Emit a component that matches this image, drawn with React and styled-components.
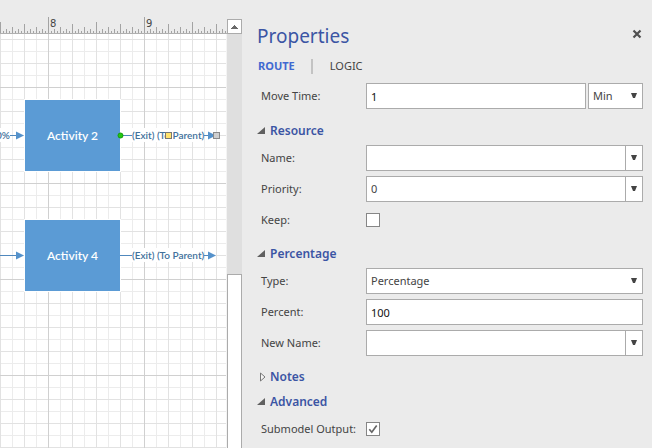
import React, { useState } from "react";
import styled, { createGlobalStyle, css } from "styled-components";

const GlobalStyle = createGlobalStyle`
  *, *::before, *::after { box-sizing: border-box; }
  body {
    margin: 0;
    background: #ebebeb;
    color: #444;
    font: 11px/16px "Noto Sans", "Open Sans", sans-serif;
  }
  button, input, select { font: inherit; color: inherit; margin: 0; }
`;

const Window = styled.div`
  display: grid;
  grid-template-columns: minmax(0, 242fr) minmax(0, 410fr);
  height: 100vh;
  overflow: hidden;
`;

/* ---------- drawing workspace ---------- */

const Workspace = styled.main`
  min-width: 0;
  display: flex;
  padding-top: 17px;
`;

const Sheet = styled.div`
  flex: 1;
  min-width: 0;
  display: flex;
  flex-direction: column;
  overflow: hidden;
`;

const RulerSvg = styled.svg`
  display: block;
  flex: none;
  width: 100%;
  height: 17px;
  border-bottom: 1px solid #b0b0b0;
  font: 10px "DejaVu Sans", sans-serif;
  fill: #444;
`;

const Canvas = styled.div`
  position: relative;
  flex: 1;
  overflow: hidden;
  border-right: 1px solid #f4f4f4;
  background-color: #fff;
  background-image:
    linear-gradient(90deg, #d0d0d0 1px, transparent 1px),
    linear-gradient(#d0d0d0 1px, transparent 1px),
    linear-gradient(90deg, #e2e2e2 1px, transparent 1px),
    linear-gradient(#e2e2e2 1px, transparent 1px),
    linear-gradient(90deg, #ececec 1px, transparent 1px),
    linear-gradient(#ececec 1px, transparent 1px);
  background-size: 96px 96px, 96px 96px, 24px 24px, 24px 24px, 12px 12px, 12px 12px;
  background-position: 48px 0, 0 53px, 0 0, 0 5px, 0 0, 0 5px;
`;

const Node = styled.div`
  position: absolute;
  left: 25px;
  top: ${(p) => p.$y}px;
  width: 95px;
  height: 71px;
  display: flex;
  align-items: center;
  justify-content: center;
  background: #5b9bd5;
  color: #fff;
  box-shadow: 0 0 0 1px #fff;
  font: 600 12px/16px Lato, "Noto Sans", sans-serif;
`;

const RouteLabel = styled.span`
  position: absolute;
  left: ${(p) => p.$x}px;
  top: ${(p) => p.$y}px;
  background: #fff;
  color: #41719c;
  font: 600 10px/14px Lato, "Noto Sans", sans-serif;
  white-space: nowrap;
`;

const Connectors = styled.svg`
  position: absolute;
  left: 0;
  top: 0;
  width: 100%;
  height: 100%;
`;

const ScrollBar = styled.div`
  flex: none;
  width: 15px;
  margin-top: 2px;
  display: flex;
  flex-direction: column;
  background: #dfdfdf;
`;

const ScrollButton = styled.button`
  height: 15px;
  padding: 0;
  display: grid;
  place-items: center;
  background: #fff;
  border: 1px solid #ababab;
`;

const ScrollTrack = styled.div`
  flex: 1;
  display: flex;
  flex-direction: column;
  padding-top: 240px;
`;

const ScrollThumb = styled.div`
  flex: 1;
  background: #fff;
  border: 1px solid #ababab;
  border-bottom: 0;
`;

/* ---------- properties pane ---------- */

const Pane = styled.aside`
  min-width: 0;
  padding: 20px 9px 0 15px;
`;

const PaneHeader = styled.header`
  display: flex;
  align-items: center;
  justify-content: space-between;
  height: 32px;
`;

const Title = styled.h1`
  margin: 0;
  color: #3b55a4;
  font: 400 19px/32px "Noto Sans", "Open Sans", sans-serif;
`;

const CloseButton = styled.button`
  width: 12px;
  height: 14px;
  padding: 0;
  margin-bottom: 4px;
  display: grid;
  place-items: center;
  background: none;
  border: 0;
`;

const Tabs = styled.div`
  display: flex;
  align-items: center;
  height: 28px;
  gap: 16px;
`;

const Tab = styled.button`
  padding: 0 0 0 1px;
  border: 0;
  background: none;
  color: ${(p) => (p.$active ? "#4169d1" : "#444")};
  font-weight: ${(p) => (p.$active ? 700 : 400)};
`;

const TabRule = styled.span`
  width: 2px;
  height: 15px;
  background: #c3c3c3;
`;

const Fields = styled.div`
  display: grid;
  gap: 5px;
  padding: ${(p) => (p.$first ? "3px 0 9px" : "2px 0 8px")};
`;

const Row = styled.div`
  display: grid;
  grid-template-columns: 105px minmax(0, 1fr);
  align-items: center;
  min-height: 26px;
  padding-left: 4px;
`;

const Label = styled.label`
  white-space: nowrap;
`;

const fieldBox = css`
  height: 26px;
  background: #fff;
  border: 1px solid #ababab;
  border-radius: 0;
`;

const TextInput = styled.input`
  ${fieldBox}
  width: 100%;
  min-width: 0;
  padding: 0 4px;
  color: #111;
`;

const WithUnit = styled.div`
  display: grid;
  grid-template-columns: minmax(0, 1fr) 55px;
  gap: 2px;
`;

const ComboBox = styled.div`
  ${fieldBox}
  display: flex;
`;

const ComboInput = styled.input`
  flex: 1;
  min-width: 0;
  padding: 0 4px;
  border: 0;
  background: none;
`;

const ComboButton = styled.button`
  width: 17px;
  padding: 0 0 2px;
  display: grid;
  place-items: center;
  background: none;
  border: 0;
  border-left: 1px solid #ababab;
`;

const SelectBox = styled.div`
  position: relative;
  display: grid;

  svg {
    position: absolute;
    right: 6px;
    top: 10px;
    pointer-events: none;
  }
`;

const Select = styled.select`
  ${fieldBox}
  appearance: none;
  width: 100%;
  padding: 0 18px 0 4px;
`;

const CheckBox = styled.input`
  appearance: none;
  width: 14px;
  height: 14px;
  background: #fff;
  border: 1px solid #868686;
  border-radius: 0;

  &:checked {
    background: #fff url("data:image/svg+xml,%3Csvg xmlns='http://www.w3.org/2000/svg' viewBox='0 0 12 12'%3E%3Cpath d='M2.3 6.3l2.5 2.9L9.7 2.6' fill='none' stroke='%23666' stroke-width='1.7'/%3E%3C/svg%3E") center / 12px 12px no-repeat;
  }
`;

const SectionTitle = styled.h2`
  margin: 0;
  font: inherit;
`;

const SectionButton = styled.button`
  display: flex;
  align-items: center;
  gap: 4px;
  height: 25px;
  padding: 0;
  border: 0;
  background: none;
  color: #3b55a4;
  font-size: 12px;
  font-weight: 600;
`;

const Arrow = () => (
  <svg width="6" height="5" viewBox="0 0 6 5" aria-hidden="true">
    <path d="M0 0h6L4 5H2z" fill="#444" />
  </svg>
);

const Expander = ({ open }) => (
  <svg width="9" height="10" viewBox="0 0 9 10" aria-hidden="true">
    {open ? (
      <path d="M8 1v7H0z" fill="#606060" />
    ) : (
      <path d="M3.5 1v8l4.500-4z" fill="#f4f4f4" stroke="#777" />
    )}
  </svg>
);

function Section({ title, initiallyOpen = true, children }) {
  const [open, setOpen] = useState(initiallyOpen);
  return (
    <section>
      <SectionTitle>
        <SectionButton aria-expanded={open} onClick={() => setOpen(!open)}>
          <Expander open={open} />
          {title}
        </SectionButton>
      </SectionTitle>
      {open && children && <Fields>{children}</Fields>}
    </section>
  );
}

function Field({ id, label, children }) {
  return (
    <Row>
      <Label htmlFor={id}>{label}</Label>
      {children}
    </Row>
  );
}

function Combo({ id, value = "", label }) {
  return (
    <ComboBox>
      <ComboInput id={id} defaultValue={value} />
      <ComboButton aria-label={`${label} choices`}>
        <Arrow />
      </ComboButton>
    </ComboBox>
  );
}

function DropDown({ id, options, ...rest }) {
  return (
    <SelectBox>
      <Select id={id} {...rest}>
        {options.map((o) => (
          <option key={o}>{o}</option>
        ))}
      </Select>
      <Arrow />
    </SelectBox>
  );
}

const tickHeight = (x) => {
  if (x % 96 === 48) return 17;
  if (x % 48 === 0) return 12;
  if (x % 24 === 0) return 10;
  if (x % 12 === 0) return 7;
  if (x % 6 === 0) return 5;
  return 3;
};

const ticks = Array.from({ length: 640 }, (_, i) => i * 3);

function Ruler() {
  return (
    <RulerSvg aria-label="Ruler">
      {ticks.map((x) => (
        <rect key={x} x={x} y={17 - tickHeight(x)} width="1" height={tickHeight(x)} fill="#a3a3a3" />
      ))}
      <text x="50" y="10">8</text>
      <text x="146" y="10">9</text>
    </RulerSvg>
  );
}

function Diagram() {
  return (
    <Canvas>
      <Node $y={66}>Activity 2</Node>
      <Node $y={186}>Activity 4</Node>
      <Connectors aria-hidden="true">
        <g stroke="#5088bd">
          <path d="M0 101.500h18M120 101.500h12M204 101.500h6" />
          <path d="M0 221.500h18M120 221.500h12M204 221.500h6" />
        </g>
        <g fill="#5592cb">
          <path d="M16 97.500v8l8-4zM208 97.500v8l8-4z" />
          <path d="M16 217.500v8l8-4zM208 217.500v8l8-4z" />
        </g>
      </Connectors>
      <RouteLabel $x={-4} $y={94}>0%</RouteLabel>
      <RouteLabel $x={132} $y={94}>(Exit) (To Parent)</RouteLabel>
      <RouteLabel $x={132} $y={214}>(Exit) (To Parent)</RouteLabel>
      <Connectors aria-hidden="true">
        <circle cx="120.500" cy="101.500" r="2.500" fill="#22c911" stroke="#149b0c" />
        <rect x="165.500" y="98.500" width="6" height="6" fill="#ffe36e" stroke="#777" />
        <rect x="213.500" y="98.500" width="6" height="6" fill="#cfcfcf" stroke="#8a8a8a" />
      </Connectors>
    </Canvas>
  );
}

export default function App() {
  const [tab, setTab] = useState("ROUTE");
  return (
    <Window>
      <GlobalStyle />
      <Workspace>
        <Sheet>
          <Ruler />
          <Diagram />
        </Sheet>
        <ScrollBar>
          <ScrollButton aria-label="Scroll up">
            <svg width="7" height="4" viewBox="0 0 7 4" shapeRendering="crispEdges" aria-hidden="true">
              <path d="M3 0h1v1h1v1h1v1h1v1H0V3h1V2h1V1h1z" fill="#6a6a6a" />
            </svg>
          </ScrollButton>
          <ScrollTrack>
            <ScrollThumb />
          </ScrollTrack>
        </ScrollBar>
      </Workspace>

      <Pane>
        <PaneHeader>
          <Title>Properties</Title>
          <CloseButton aria-label="Close">
            <svg width="10" height="10" viewBox="0 0 10 10" aria-hidden="true">
              <path d="M1.500 1.500l7 7M8.500 1.500l-7 7" stroke="#505050" strokeWidth="2.200" />
            </svg>
          </CloseButton>
        </PaneHeader>
        <Tabs role="tablist">
          <Tab role="tab" aria-selected={tab === "ROUTE"} $active={tab === "ROUTE"} onClick={() => setTab("ROUTE")}>
            ROUTE
          </Tab>
          <TabRule />
          <Tab role="tab" aria-selected={tab === "LOGIC"} $active={tab === "LOGIC"} onClick={() => setTab("LOGIC")}>
            LOGIC
          </Tab>
        </Tabs>

        <Fields $first>
          <Field id="move-time" label="Move Time:">
            <WithUnit>
              <TextInput id="move-time" defaultValue="1" />
              <DropDown aria-label="Move time unit" options={["Min", "Sec", "Hour"]} />
            </WithUnit>
          </Field>
        </Fields>

        <Section title="Resource">
          <Field id="name" label="Name:">
            <Combo id="name" label="Name" />
          </Field>
          <Field id="priority" label="Priority:">
            <Combo id="priority" label="Priority" value="0" />
          </Field>
          <Field id="keep" label="Keep:">
            <CheckBox id="keep" type="checkbox" />
          </Field>
        </Section>

        <Section title="Percentage">
          <Field id="type" label="Type:">
            <DropDown id="type" options={["Percentage", "Conditional"]} />
          </Field>
          <Field id="percent" label="Percent:">
            <TextInput id="percent" defaultValue="100" />
          </Field>
          <Field id="new-name" label="New Name:">
            <Combo id="new-name" label="New name" />
          </Field>
        </Section>

        <Section title="Notes" initiallyOpen={false} />

        <Section title="Advanced">
          <Field id="submodel" label="Submodel Output:">
            <CheckBox id="submodel" type="checkbox" defaultChecked />
          </Field>
        </Section>
      </Pane>
    </Window>
  );
}
